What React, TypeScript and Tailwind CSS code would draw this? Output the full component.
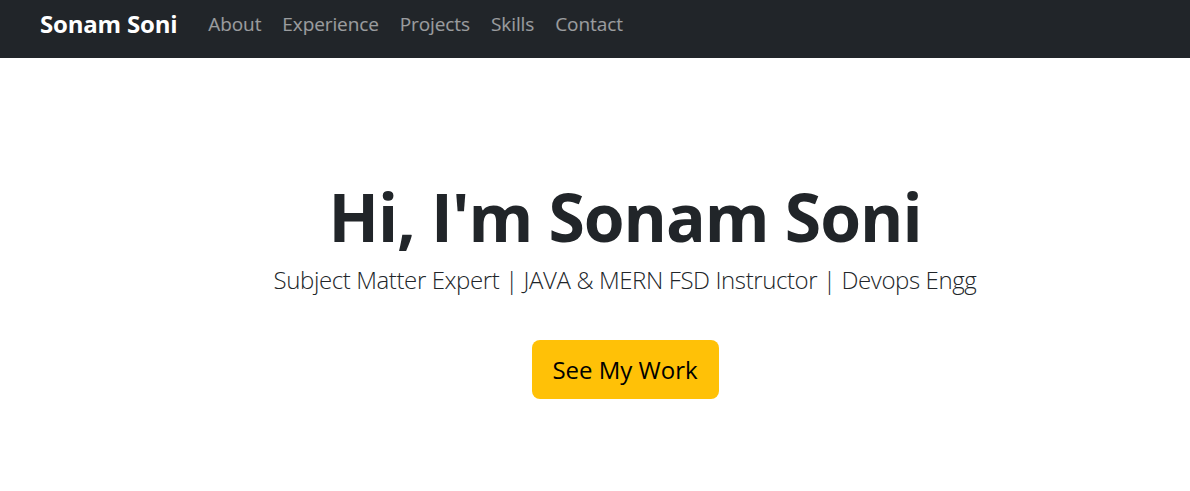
export default function App() {
  const links = ['About', 'Experience', 'Projects', 'Skills', 'Contact'];

  return (
    <div className="min-h-screen bg-white" style={{ fontFamily: '"Open Sans", "Noto Sans", sans-serif' }}>
      {/* navbar */}
      <nav className="h-[58px] bg-[#212529] flex items-start pt-[7px] pl-[40px]">
        <span className="text-white text-[24px] leading-[34px] font-bold tracking-[-0.2px] mr-[31px]">Sonam Soni</span>
        <ul className="flex items-center gap-[21px] h-[34px]">
          {links.map((l) => (
            <li key={l} className="text-[19px] text-white/55 tracking-[-0.1px]">{l}</li>
          ))}
        </ul>
      </nav>

      {/* hero */}
      <section className="flex flex-col items-center text-center pl-[60px] pt-[118px]">
        <h1 className="text-[66px] leading-[80px] font-bold text-[#212529] tracking-[-1px]">Hi, I'm Sonam Soni</h1>
        <p className="mt-[8px] text-[24px] leading-[32px] font-light text-[#212529] tracking-[-0.4px]">
          Subject Matter Expert | JAVA &amp; MERN FSD Instructor | Devops Engg
        </p>
        <button className="mt-[44px] h-[59px] w-[187px] rounded-[8px] bg-[#ffc107] text-[24px] text-black">
          See My Work
        </button>
      </section>
    </div>
  );
}
